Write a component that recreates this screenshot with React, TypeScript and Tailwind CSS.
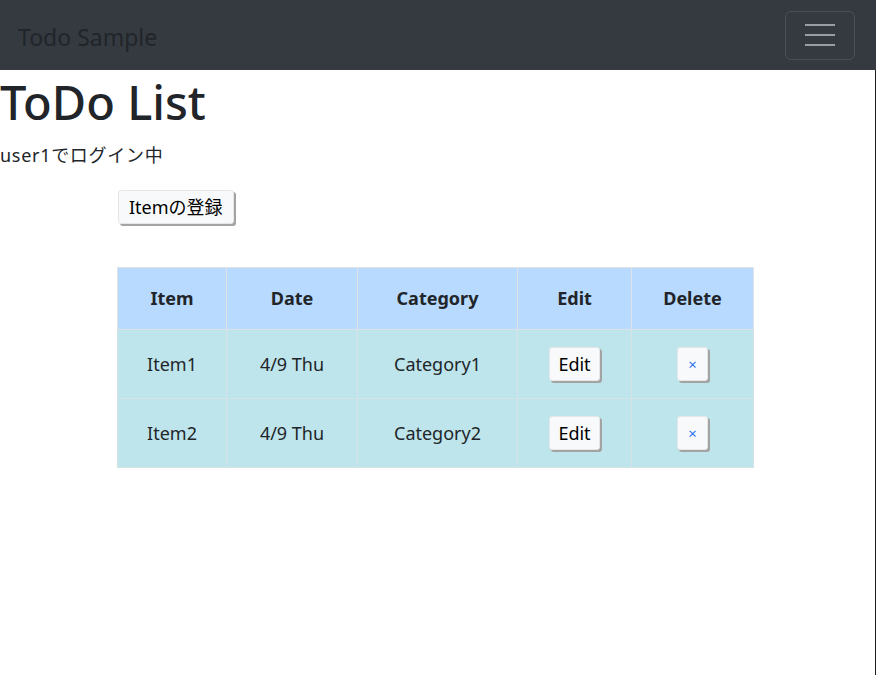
const font = { fontFamily: '"Noto Sans", "Noto Sans CJK JP", sans-serif' };

const rows = [
  { item: 'Item1', date: '4/9 Thu', category: 'Category1' },
  { item: 'Item2', date: '4/9 Thu', category: 'Category2' },
];

function NavBar() {
  return (
    <nav className="h-[70px] bg-[#343a40] flex items-center justify-between pl-[18px] pr-[21px]">
      <span className="text-[23px] text-[#212529] leading-none pt-[4px]">Todo Sample</span>
      <button className="w-[70px] h-[49px] rounded-[6px] border border-[#4b5057] flex flex-col items-center justify-center gap-[8px]">
        <span className="block w-[30px] h-[2px] bg-[#9a9da1]" />
        <span className="block w-[30px] h-[2px] bg-[#9a9da1]" />
        <span className="block w-[30px] h-[2px] bg-[#9a9da1]" />
      </button>
    </nav>
  );
}

// native-looking button with the gray drop edge
function RawButton({ children, className = '' }: { children: React.ReactNode; className?: string }) {
  return (
    <button
      className={`bg-[#f8f9fa] border border-[#e4e6e8] rounded-[3px] shadow-[2px_2px_0_#a3a3a3] leading-none ${className}`}
    >
      {children}
    </button>
  );
}

export default function App() {
  return (
    <div className="min-h-[675px] bg-white text-[#212529]" style={font}>
      <NavBar />
      <main className="border-r border-[#1e1e1e] min-h-[605px]">
        <h1 className="text-[47px] font-medium leading-[1.2] pt-[4px]">ToDo List</h1>
        <p className="text-[18px] leading-[1.5] mt-[12px] tracking-[0.7px]">user1でログイン中</p>
        <div className="pl-[118px] mt-[21px]">
          <RawButton className="h-[34px] px-[10px] text-[18px] text-black">Itemの登録</RawButton>
        </div>
        <div className="pl-[117px] mt-[43px]">
          <table className="border-collapse text-[18px] text-center">
            <thead>
              <tr className="bg-[#b8daff] h-[62px]">
                <th className="w-[109px] border border-[#dee2e6]">Item</th>
                <th className="w-[131px] border border-[#dee2e6]">Date</th>
                <th className="w-[160px] border border-[#dee2e6]">Category</th>
                <th className="w-[114px] border border-[#dee2e6]">Edit</th>
                <th className="w-[122px] border border-[#dee2e6]">Delete</th>
              </tr>
            </thead>
            <tbody>
              {rows.map((r) => (
                <tr key={r.item} className="bg-[#bee5eb] h-[69px]">
                  <td className="border border-[#d5e3e7]">{r.item}</td>
                  <td className="border border-[#d5e3e7]">{r.date}</td>
                  <td className="border border-[#d5e3e7]">{r.category}</td>
                  <td className="border border-[#d5e3e7]">
                    <RawButton className="h-[34px] px-[8px] text-[18px] text-black">Edit</RawButton>
                  </td>
                  <td className="border border-[#d5e3e7]">
                    <RawButton className="h-[34px] w-[31px] text-[15px] text-[#2f74f5]">×</RawButton>
                  </td>
                </tr>
              ))}
            </tbody>
          </table>
        </div>
      </main>
    </div>
  );
}
